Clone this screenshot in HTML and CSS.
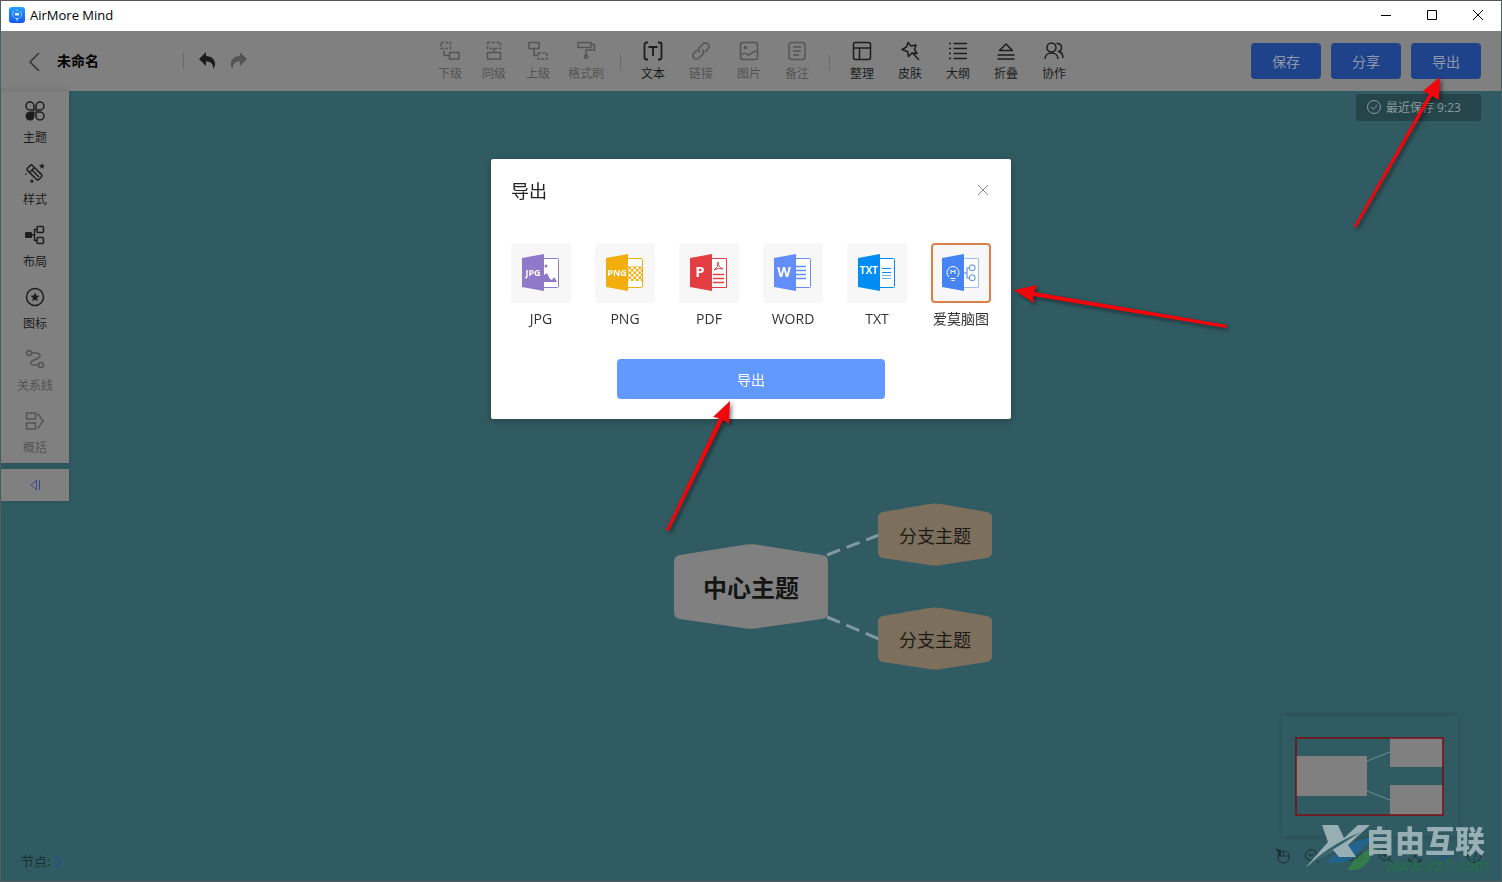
FILE: index.html
```html
<!DOCTYPE html>
<html lang="zh-CN">
<head>
<meta charset="utf-8">
<meta name="viewport" content="width=device-width, initial-scale=1">
<title>AirMore Mind</title>
<link rel="stylesheet" href="styles.css">
</head>
<body>
<div class="window">
  <div class="titlebar">
    <svg class="app-icon" viewBox="0 0 16 16">
      <defs><linearGradient id="appg" x1="0" y1="0" x2="0" y2="1"><stop offset="0" stop-color="#22a3ff"/><stop offset="1" stop-color="#1557f5"/></linearGradient></defs>
      <rect width="16" height="16" rx="3" fill="url(#appg)"/>
      <path d="M5.500 11A4.600 4.600 0 0 1 5 4M10.500 11A4.600 4.600 0 0 0 11 4M6.800 3.200h2.400" fill="none" stroke="#8fcbff" stroke-width="1"/>
      <path d="M6 6h4v2.500H6z" fill="#e6f4ff"/><path d="M6.300 11.500h3.400M7 13h2" stroke="#bfe2ff"/>
    </svg>
    <span class="app-name">AirMore Mind</span>
    <button class="win-btn" aria-label="最小化"><svg viewBox="0 0 12 12"><path d="M1 6.500h10"/></svg></button>
    <button class="win-btn" aria-label="最大化"><svg viewBox="0 0 12 12"><path d="M1.500 1.500h9v9h-9z"/></svg></button>
    <button class="win-btn" aria-label="关闭"><svg viewBox="0 0 12 12"><path d="M1 1l10 10M11 1L1 11"/></svg></button>
  </div>

  <header class="header">
    <div class="header-left">
      <button class="plain back" aria-label="返回"><svg class="i20" viewBox="0 0 20 20"><path d="M14 2L5 11l9 9" stroke="#333"/></svg></button>
      <h1 class="doc-name">未命名</h1>
      <span class="sep"></span>
      <button class="plain undo" aria-label="撤销"><svg class="i20" viewBox="0 0 20 20"><path class="fill" d="M8 1v4c6 0 9.500 4 9 9-.3 2-1 3-1.800 4 .3-5-2.200-7.500-7.200-7.500V15L1 8z"/></svg></button>
      <button class="plain off" aria-label="重做"><svg class="i20" viewBox="0 0 20 20"><path class="fill" d="M12 1v4C6 5 2.500 9 3 14c.3 2 1 3 1.800 4-.3-5 2.200-7.500 7.200-7.500V15l7-7z"/></svg></button>
    </div>
    <nav class="tools">
      <button class="tool small off"><svg class="i20" viewBox="0 0 20 20"><path stroke-dasharray="3 1.500" d="M1 1.500h9.500v6H1z"/><path d="M4 9.500v5h5M9.500 11.500h9.500v6.500H9.500z"/></svg>下级</button>
      <button class="tool small off"><svg class="i20" viewBox="0 0 20 20"><path stroke-dasharray="3 1.500" d="M3.500 1.500h13v6h-13z"/><path d="M10 7.500V11M3.500 11.500h13v6.500h-13z"/></svg>同级</button>
      <button class="tool small off"><svg class="i20" viewBox="0 0 20 20"><path d="M1 1.500h10v6H1zM6 7.500v7h3"/><path stroke-dasharray="3 1.500" d="M10 12h9v6h-9z"/></svg>上级</button>
      <button class="tool brush off"><svg class="i20" viewBox="0 0 20 20"><path d="M2 1.500h13v5H2zM15 3.500h3.500v5.500H10v4M10 13q1.500 2 1.500 3.500a1.700 1.700 0 0 1-3 0Q8.500 15 10 13z"/></svg>格式刷</button>
      <span class="sep wide"></span>
      <button class="tool"><svg class="i20" viewBox="0 0 20 20"><path stroke-width="1.800" d="M5 1.500H3.500a2 2 0 0 0-2 2v13a2 2 0 0 0 2 2H5M15 1.500h1.500a2 2 0 0 1 2 2v13a2 2 0 0 1-2 2H15M5.500 6h9M10 6v9"/></svg>文本</button>
      <button class="tool off"><svg class="i20" viewBox="0 0 20 20"><path d="M8.500 11.500a3.500 3.500 0 0 1 0-5l3.500-3.500a3.500 3.500 0 0 1 5 5l-3 3M11.500 8.500a3.500 3.500 0 0 1 0 5L8 17a3.500 3.500 0 0 1-5-5l3-3"/></svg>链接</button>
      <button class="tool off"><svg class="i20" viewBox="0 0 20 20"><rect x="1.500" y="1.500" width="17" height="17" rx="2"/><circle cx="6.500" cy="6.500" r="1"/><path d="M2 14c3-3 5-2 7 0 3 0 4-4 9-4"/></svg>图片</button>
      <button class="tool off"><svg class="i20" viewBox="0 0 20 20"><rect x="2" y="1.500" width="16" height="17" rx="3"/><path d="M6 6h8M6 10h8M6 14h6"/></svg>备注</button>
      <span class="sep wide"></span>
      <button class="tool"><svg class="i20" viewBox="0 0 20 20"><rect x="1.500" y="1.500" width="17" height="17" rx="2"/><path d="M1.500 7h17M7.500 7v11.500"/></svg>整理</button>
      <button class="tool"><svg class="i20" viewBox="0 0 20 20"><path d="M8 1.500l3 3.500 5-1-1.500 4.500 2.500 4-5-.5-3.500 3.500-1-5L2 8.500 6.500 6zM13 12.500l6 6.500"/></svg>皮肤</button>
      <button class="tool"><svg class="i20" viewBox="0 0 20 20"><path d="M5.500 2.500H19M5.500 7.500H19M5.500 12.500H19M5.500 17.500H19M1 2.500h2M1 7.500h2M1 12.500h2M1 17.500h2"/></svg>大纲</button>
      <button class="tool"><svg class="i20" viewBox="0 0 20 20"><path d="M3.500 9.500L10 3l6.500 6.500zM1.500 14h17M1.500 18h17"/></svg>折叠</button>
      <button class="tool"><svg class="i20" viewBox="0 0 20 20"><circle cx="7.500" cy="6.500" r="4.500"/><path d="M1 18c0-8 13-8 13 0M12.500 2.500c6-.5 6.500 7 2 8 2.500.5 4.500 3 4.500 6.500"/></svg>协作</button>
    </nav>
    <div class="header-right">
      <button class="blue">保存</button>
      <button class="blue">分享</button>
      <button class="blue">导出</button>
    </div>
  </header>

  <main class="canvas">
    <aside class="side">
      <div class="panel">
        <button class="side-item"><svg class="i20" viewBox="0 0 20 20"><path d="M9 9H5a4 4 0 1 1 4-4zM11 9h4a4 4 0 1 0-4-4zM11 11h4a4 4 0 1 1-4 4z"/><path class="fill" d="M9.500 10.500H5A4.500 4.500 0 1 0 9.500 15z"/></svg>主题</button>
        <button class="side-item"><svg class="i20" viewBox="0 0 20 20"><rect x="6" y="1.500" width="7" height="16" rx="1.500" transform="rotate(-45 9.500 9.500)"/><path d="M4.500 9.500l5-5M7 7l7 7"/><path class="fill" d="M17 0l.8 2 2.200.2-1.700 1.400.6 2.100-1.900-1.200-1.900 1.200.6-2.100L14 2.200l2.200-.2zM7 16l.5 1.200 1.500.3-1 1 .2 1.500L7 19.200 5.500 20l.3-1.500-1-1 1.500-.3zM0 11l1-1 1 1-1 1z"/></svg>样式</button>
        <button class="side-item"><svg class="i20" viewBox="0 0 20 20"><rect class="fill" y="7" width="7" height="6" rx="1"/><path d="M7 10h2.500M12 4.500H9.500v11H12"/><rect x="12" y="1.500" width="6.500" height="6" rx="1"/><rect x="12" y="12.500" width="6.500" height="6" rx="1"/></svg>布局</button>
        <button class="side-item"><svg class="i20" viewBox="0 0 20 20"><circle cx="10" cy="10" r="8.500"/><path class="fill" d="M10 5.500l1.300 3 3.200.3L12 11l.8 3.200-2.800-1.700-2.800 1.700L8 11 5.500 8.800l3.200-.3z"/></svg>图标</button>
        <button class="side-item off"><svg class="i20" viewBox="0 0 20 20"><circle cx="4" cy="4" r="2.500"/><circle cx="16" cy="16" r="2.500"/><path d="M6.500 4H11c5 0 5 4 1.500 5.500L8 11.500C5 13 5 16 8.500 16h5"/></svg>关系线</button>
        <button class="side-item off"><svg class="i20" viewBox="0 0 20 20"><path d="M1.500 2h9v6h-9zM1.500 12h9v6h-9zM12 3c3.500 0 3 6 6.500 7-3.500 1-3 7-6.500 7"/></svg>概括</button>
      </div>
      <button class="collapse" aria-label="收起"><svg viewBox="0 0 12 12"><path d="M7.500 1.500L2 6l5.500 4.500zM7.500 1v10M10.500 1v10"/></svg></button>
    </aside>

    <svg class="mindmap" viewBox="0 0 320 170">
      <g class="links"><path d="M153 53L205 33"/><path d="M153 115L205 137"/></g>
      <g class="root"><path d="M6 53L72 42.600Q77 42 82 42.600L148 53Q154 54 154 60V110Q154 116 148 117L82 126.400Q77 127 72 126.400L6 117Q0 116 0 110V60Q0 54 6 53Z"/><text x="77" y="95">中心主题</text></g>
      <g class="branch"><path d="M209 10L255 2Q261 1 267 2L313 10Q318 11 318 15V50Q318 55 313 56L267 63Q261 64 255 63L209 56Q204 55 204 50V15Q204 11 209 10Z"/><text x="261" y="41">分支主题</text></g>
      <g class="branch"><path d="M209 114L255 106Q261 105 267 106L313 114Q318 115 318 119V154Q318 159 313 160L267 167Q261 168 255 167L209 160Q204 159 204 154V119Q204 115 209 114Z"/><text x="261" y="145">分支主题</text></g>
    </svg>

    <div class="saved"><svg viewBox="0 0 16 16"><circle cx="8" cy="8" r="6.500"/><path d="M5 8l2.200 2.300L11.500 6"/></svg>最近保存 9:23</div>

    <footer class="status">
      <div class="count">节点: <span class="num">3</span></div>
      <div class="view">
        <div class="minimap">
          <svg viewBox="0 0 149 79"><path d="M1 19h71v40H1zM95 1h53v29H95zM95 48h53v30H95z" fill="#808080"/><path d="M72 24L95 15M72 54L95 63" stroke="#6f8d8e"/><rect x="1" y="1" width="147" height="77" fill="none" stroke="#7b0c16" stroke-width="1.500"/></svg>
        </div>
        <div class="view-tools">
          <button class="plain" aria-label="鼠标模式"><svg class="i16" viewBox="0 0 16 16"><rect x="3" y="3" width="11" height="12" rx="5"/><path class="fill" d="M0 0l6 2v6H3V4z"/><path d="M3 8h11M8.500 3v5"/></svg></button>
          <button class="plain" aria-label="缩小"><svg class="i16" viewBox="0 0 16 16"><circle cx="7" cy="7" r="5.500"/><path d="M4.500 7h5M11 11l4 4"/></svg></button>
          <span class="zoom">100%</span>
          <button class="plain" aria-label="放大"><svg class="i16" viewBox="0 0 16 16"><circle cx="7" cy="7" r="5.500"/><path d="M4.500 7h5M7 4.500v5M11 11l4 4"/></svg></button>
          <button class="plain" aria-label="适应画布"><svg class="i16" viewBox="0 0 16 16"><path d="M2 6V2h4M10 2h4v4M14 10v4h-4M6 14H2v-4M3 3l10 10M13 3L3 13"/></svg></button>
          <button class="plain eye" aria-label="预览"><svg class="i16" viewBox="0 0 16 16"><path d="M1 8q7-9 14 0-7 9-14 0z"/><circle cx="8" cy="8" r="2.500"/></svg></button>
          <button class="plain" aria-label="帮助"><svg class="i16" viewBox="0 0 16 16"><circle cx="8" cy="8" r="6.500"/><path d="M6 6.500c0-3 4-2.500 4 0 0 1.500-2 1.500-2 3M8 11v1.500"/></svg></button>
        </div>
      </div>
    </footer>
  </main>
</div>

<div class="overlay">
  <section class="dialog" role="dialog" aria-labelledby="dlg-title">
    <div class="dialog-head">
      <h2 id="dlg-title">导出</h2>
      <button class="plain close" aria-label="关闭对话框"><svg viewBox="0 0 12 12"><path d="M1 1l10 10M11 1L1 11"/></svg></button>
    </div>
    <div class="formats">
      <button class="format"><span class="tile"><svg viewBox="0 0 38 38"><path d="M22 4.500h13.500q1 0 1 1v27q0 1-1 1H22" fill="#fff" stroke="#9079c8"/><path d="M0 4L22 0v37L0 33z" fill="#9079c8"/><path d="M22 21l3-2 3 6 2 1 2-3 3 5H22z" fill="#9079c8"/><circle cx="24" cy="12" r="1.500" fill="#9079c8"/><text x="11" y="22" font-size="9">JPG</text></svg></span>JPG</button>
      <button class="format"><span class="tile"><svg viewBox="0 0 38 38"><defs><pattern id="chk" width="5" height="5" patternUnits="userSpaceOnUse"><path d="M0 0h2.500v2.500H0zM2.500 2.500H5V5H2.500z" fill="#f2ae0d"/></pattern></defs><path d="M22 4.500h13.500q1 0 1 1v27q0 1-1 1H22" fill="#fff" stroke="#f2ae0d"/><path d="M22 12h14v15H22z" fill="url(#chk)"/><path d="M0 4L22 0v37L0 33z" fill="#f2ae0d"/><text x="11" y="22" font-size="9">PNG</text></svg></span>PNG</button>
      <button class="format"><span class="tile"><svg viewBox="0 0 38 38"><path d="M22 4.500h14.500v29H22" fill="#fff" stroke="#e53e42"/><path d="M0 4L22 0v37L0 33z" fill="#e53e42"/><path d="M23 20.500h11M23 24.500h11M23 28.500h11" stroke="#e53e42" stroke-width="1.500"/><path d="M28 8q1 5-4 8 5-3 9-1-5-2-5-7z" fill="none" stroke="#e53e42"/><text x="10" y="23" font-size="15">P</text></svg></span>PDF</button>
      <button class="format"><span class="tile"><svg viewBox="0 0 38 38"><path d="M22 4.500h13.500q1 0 1 1v27q0 1-1 1H22" fill="#fff" stroke="#638dfa"/><path d="M0 4L22 0v37L0 33z" fill="#638dfa"/><path d="M22 12.500h10M22 16.500h10M22 20.500h10M22 24.500h10" stroke="#638dfa" stroke-width="1.500"/><text x="10" y="23" font-size="14">W</text></svg></span>WORD</button>
      <button class="format"><span class="tile"><svg viewBox="0 0 38 38"><path d="M22 4.500h13.500q1 0 1 1v27q0 1-1 1H22" fill="#fff" stroke="#008cf5"/><path d="M0 4L22 0v37L0 33z" fill="#008cf5"/><path d="M24 14.500h9M24 18.500h9" stroke="#008cf5"/><path d="M24 21.500h9M24 24.500h9" stroke="#6db6f0"/><text x="11" y="20" font-size="10">TXT</text></svg></span>TXT</button>
      <button class="format selected" aria-pressed="true"><span class="tile"><svg viewBox="0 0 38 38"><path d="M22 4.500h14.500v29H22" fill="#fff" stroke="#9dbdf7"/><path d="M0 4L22 0v37L0 33z" fill="#4684f4"/><path d="M7 23a6 6 0 1 1 8 0M8.500 24.500h5M9.500 26.500h3M9 20v-4l2 2 2-2v4" fill="none" stroke="#fff"/><path d="M22 19h3M28 14h-3v10h3" fill="none" stroke="#4684f4"/><rect x="27.500" y="11" width="5.500" height="5.500" rx="2" fill="#fff" stroke="#4684f4"/><rect x="27.500" y="21" width="5.500" height="5.500" rx="2" fill="#fff" stroke="#4684f4"/></svg></span>爱莫脑图</button>
    </div>
    <button class="export">导出</button>
  </section>
</div>

<svg class="arrows" viewBox="0 0 1502 882">
  <g fill="#f0060b">
    <path d="M1440 77L1439 100L1432 96L1356 228L1354 226L1429 94L1423 91Z"/>
    <path d="M1014 290L1037 285L1034 292L1227 325L1226 328L1033 296L1034 303Z"/>
    <path d="M730 401L729 424L723 420L669 531L666 530L719 418L713 417Z"/>
  </g>
</svg>

<div class="watermark">
  <svg viewBox="0 0 80 50">
    <path d="M22 38Q48 12 78 12Q62 17 54 28Q46 41 22 38Z" fill="#21679a" opacity=".8"/>
    <path d="M42 46Q55 26 74 22Q66 30 64 36Q56 48 42 46Z" fill="#348449" opacity=".8"/>
    <path d="M17 1H33L39 14L53 1H65L43 21L51 33H34L28 26L1 43L23 18Z" fill="#97afb3"/>
    <path d="M2 43Q22 22 56 8Q28 25 2 43Z" fill="#33636a"/>
  </svg>
  <div class="wm-text"><span class="wm-name">自由互联</span><span class="wm-url">www.xz7.com</span></div>
</div>
</body>
</html>
```

FILE: styles.css
```css
* { box-sizing: border-box; }

body {
  margin: 0;
  font-family: "Open Sans", "Noto Sans CJK SC", sans-serif;
  font-size: 12px;
  color: #1c1c1c;
}

button {
  margin: 0;
  padding: 0;
  border: 0;
  background: none;
  font: inherit;
  color: inherit;
}

svg {
  display: block;
  flex: none;
}

h1, h2 { margin: 0; }

.window {
  display: flex;
  flex-direction: column;
  min-height: 100vh;
  border-top: 1px solid #555;
  border-left: 1px solid #4b6064;
  border-right: 1px solid #4b6064;
  border-bottom: 1px solid #555f62;
  background: #315b62;
}

.titlebar {
  display: flex;
  align-items: center;
  height: 30px;
  padding: 0 0 2px 8px;
  background: #fff;
  color: #000;
}

.app-icon { width: 16px; height: 16px; }
.app-name { flex: 1; padding-left: 5px; font-family: "Open Sans", sans-serif; font-size: 13px; }
.win-btn { display: grid; place-items: center; width: 46px; height: 28px; }
.win-btn svg { width: 12px; height: 12px; fill: none; stroke: #000; }

.header {
  display: flex;
  align-items: center;
  height: 60px;
  padding: 0 20px 0 24px;
  background: #808080;
}

.header-left, .header-right {
  display: flex;
  flex: 1;
  align-items: center;
  padding-bottom: 1px;
}

.header-left { gap: 10px; }
.header-right { justify-content: flex-end; gap: 10px; }
.doc-name { width: 116px; margin-left: 2px; font-size: 14px; line-height: 20px; color: #000; }
.sep { width: 1px; height: 16px; background: #6a6a6a; }
.sep.wide { margin: 0 8px; }
.undo { margin-left: 4px; }

.i20, .i16 {
  fill: none;
  stroke: currentColor;
  stroke-width: 1.5px;
  stroke-linejoin: round;
}
.i20 { width: 20px; height: 20px; }
.i16 { width: 16px; height: 16px; stroke-width: 1px; }
.fill { fill: currentColor; stroke: none; }

.tools { display: flex; align-items: center; padding-top: 2px; }

.tool, .side-item {
  display: flex;
  flex-direction: column;
  align-items: center;
  line-height: 18px;
}

.tool { width: 48px; gap: 4px; }
.tool.small { width: 44px; }
.tool.brush { width: 52px; }
.off { color: #545454; }

.blue {
  width: 70px;
  height: 36px;
  border-radius: 4px;
  background: #1f438a;
  color: #9099ac;
  font-size: 14px;
}

.canvas {
  position: relative;
  display: flex;
  flex: 1;
  flex-direction: column;
  justify-content: space-between;
}

.side {
  display: flex;
  flex-direction: column;
  gap: 6px;
  width: 68px;
}

.panel, .collapse {
  background: #808080;
  box-shadow: 0 0 6px rgba(0, 0, 0, .15);
}
.side-item { width: 100%; height: 62px; padding-top: 10px; gap: 8px; }
.collapse { display: grid; place-items: center; height: 32px; }
.collapse svg { width: 12px; height: 12px; fill: none; stroke: #3d4790; }

/* Nodes on the free canvas */
.mindmap {
  position: absolute;
  top: 411px;
  left: calc(50% - 77px);
  width: 320px;
  height: 170px;
  text-anchor: middle;
}
.links { stroke: #7f98a3; stroke-width: 3px; stroke-dasharray: 14 7; }
.root path { fill: #808080; }
.root text { font-size: 24px; font-weight: 700; fill: #151515; }
.branch path { fill: #7c705c; }
.branch text { font-size: 18px; fill: #1c1a17; }

.saved {
  position: absolute;
  top: 3px;
  right: 20px;
  display: flex;
  align-items: center;
  gap: 4px;
  width: 125px;
  height: 27px;
  padding: 0 0 1px 10px;
  border-radius: 2px;
  background: #25454a;
  color: #8d9b9d;
}
.saved svg { width: 16px; height: 16px; fill: none; stroke: currentColor; }

.status {
  display: flex;
  align-items: flex-end;
  justify-content: space-between;
  padding: 0 19px 10px 20px;
  color: #1a3034;
}
.count { font-size: 13px; line-height: 20px; }
.num { color: #27499a; }
.view { display: flex; flex-direction: column; gap: 12px; width: 207px; padding-bottom: 7px; }
.minimap {
  width: 176px;
  height: 120px;
  margin-left: 7px;
  padding: 21px 13px;
  box-shadow: 0 0 8px rgba(0, 0, 0, .18);
}
.minimap svg { width: 149px; height: 79px; }
.view-tools { display: flex; align-items: center; justify-content: space-between; height: 16px; }
.eye { color: #21498f; }

.overlay {
  position: fixed;
  inset: 0;
  display: flex;
  align-items: flex-start;
  justify-content: center;
  padding-top: 159px;
}

.dialog {
  width: 520px;
  padding: 19px 20px 20px;
  border-radius: 2px;
  background: #fff;
  box-shadow: 0 2px 8px rgba(0, 0, 0, .25);
}
.dialog-head { display: flex; align-items: center; justify-content: space-between; height: 24px; }
.dialog-head h2 { font-size: 18px; font-weight: 400; color: #222; }
.close { padding: 0 2px; }
.close svg { width: 12px; height: 12px; fill: none; stroke: #888; }

.formats { display: flex; justify-content: space-between; margin-top: 41px; }
.format {
  display: flex;
  flex-direction: column;
  align-items: center;
  gap: 6px;
  width: 60px;
  font-size: 14px;
  line-height: 20px;
  color: #333;
  white-space: nowrap;
}
.tile {
  display: grid;
  place-items: center;
  width: 60px;
  height: 60px;
  border-radius: 4px;
  background: #f7f7f7;
}
.tile svg { width: 38px; height: 38px; }
.tile text { fill: #fff; font-weight: 700; text-anchor: middle; }
.selected .tile { border: 2px solid #d98148; }

.export {
  display: block;
  width: 268px;
  height: 40px;
  margin: 30px auto 0;
  border-radius: 4px;
  background: #6199ff;
  color: #fff;
  font-size: 14px;
}

.arrows {
  position: fixed;
  inset: 0;
  width: 100%;
  height: 100%;
  pointer-events: none;
  filter: drop-shadow(2px 2px 2px rgba(0, 0, 0, .5));
}

.watermark {
  position: fixed;
  right: 13px;
  bottom: 8px;
  display: flex;
  align-items: flex-start;
  pointer-events: none;
}
.watermark svg { width: 80px; height: 50px; margin-right: -20px; }
.wm-text { display: flex; flex-direction: column; align-items: flex-end; }
.wm-name { padding-right: 4px; font-size: 30px; font-weight: 900; line-height: 34px; color: #97afb3; }
.wm-url { font-family: "Liberation Sans", sans-serif; font-size: 17px; line-height: 16px; color: #237345; }
```
